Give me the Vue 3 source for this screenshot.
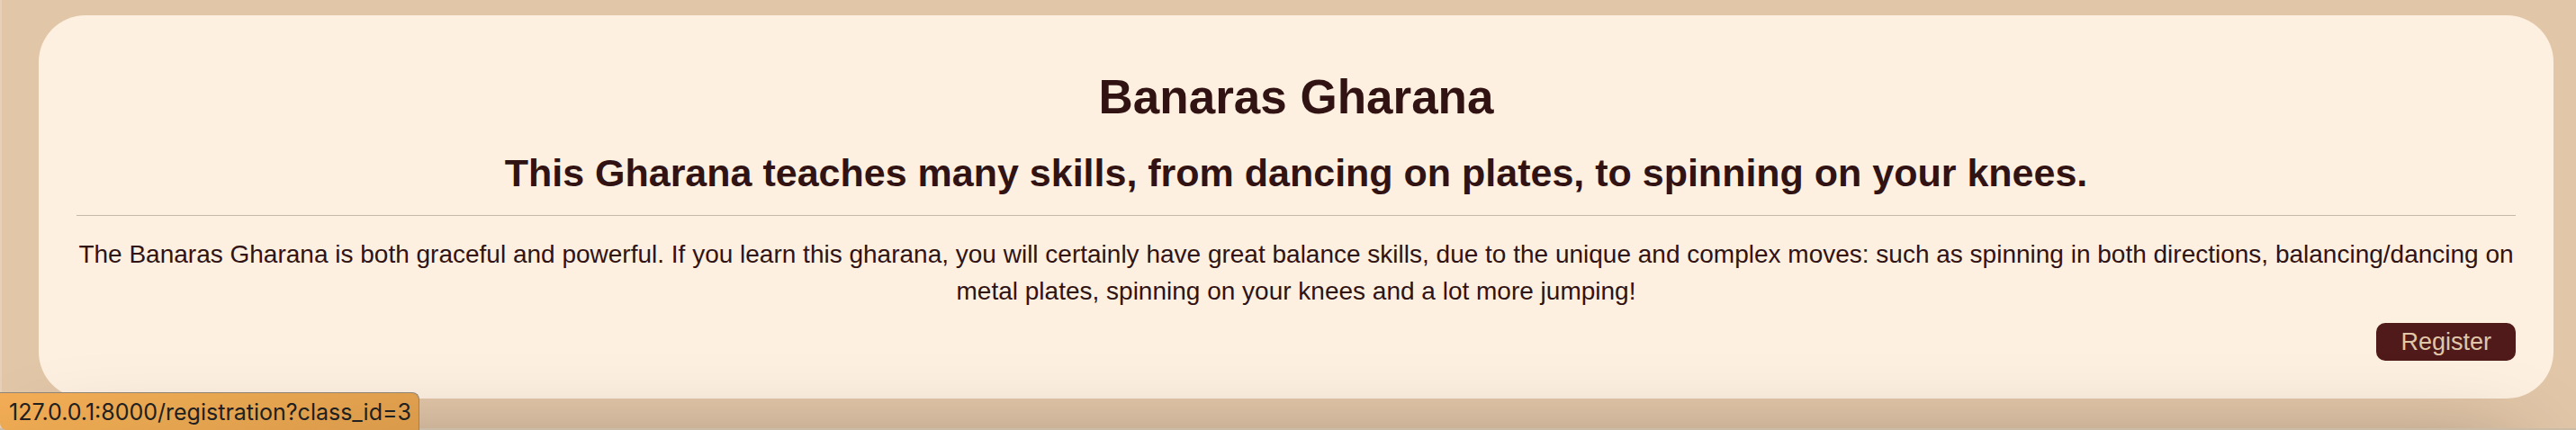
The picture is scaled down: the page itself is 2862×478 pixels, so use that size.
<script setup>
const gharana = {
  id: 3,
  name: 'Banaras Gharana',
  tagline: 'This Gharana teaches many skills, from dancing on plates, to spinning on your knees.',
  description:
    'The Banaras Gharana is both graceful and powerful. If you learn this gharana, you will certainly have great balance skills, due to the unique and complex moves: such as spinning in both directions, balancing/dancing on metal plates, spinning on your knees and a lot more jumping!'
}
const host = '127.0.0.1:8000'
const path = `/registration?class_id=${gharana.id}`
</script>

<template>
  <main class="page">
    <article class="card">
      <h1 class="title">{{ gharana.name }}</h1>
      <h2 class="tagline">{{ gharana.tagline }}</h2>
      <hr class="rule" />
      <p class="description">{{ gharana.description }}</p>
      <div class="actions">
        <a class="register" :href="path">Register</a>
      </div>
    </article>
    <div class="shade"></div>
    <div class="status">{{ host }}{{ path }}</div>
  </main>
</template>

<style>
body {
  margin: 0;
  background: #e2c6a8;
}
</style>

<style scoped>
.page {
  position: relative;
  box-sizing: border-box;
  min-height: 100vh;
  padding: 17px 25px 35px 43px;
  overflow: hidden;
  background: #e2c6a8;
  box-shadow: inset 2px 0 #e6d0b8;
  color: #301312;
  font-family: "Liberation Sans", Arial, sans-serif;
}

.page::after {
  content: "";
  position: absolute;
  right: 0;
  bottom: 0;
  left: 0;
  height: 2px;
  background: #cbbca8;
}

.card {
  padding: 59px 42px 42px;
  border-radius: 52px;
  background: #fdf0e1;
  text-align: center;
}

.title {
  margin: 0;
  font-size: 53px;
  line-height: 64px;
}

.tagline {
  margin: 24px 0 19px;
  font-size: 43px;
  line-height: 56px;
}

.rule {
  height: 1px;
  margin: 0;
  border: 0;
  background: #c4baac;
}

.description {
  margin: 0 -8px;
  padding: 22px 0 15px;
  font-size: 28px;
  line-height: 41px;
}

.actions {
  display: flex;
  justify-content: flex-end;
}

.register {
  padding: 0 27px;
  border-radius: 10px;
  background: #4f1a19;
  color: #e2c6a8;
  font-size: 27px;
  line-height: 42px;
  text-decoration: none;
}

.shade {
  position: absolute;
  top: calc(100% + 26px);
  right: 70px;
  left: 50px;
  height: 200px;
  box-shadow: 0 0 100px rgba(0, 0, 0, 0.35);
}

.status {
  position: absolute;
  z-index: 1;
  bottom: 0;
  left: 0;
  box-sizing: border-box;
  padding: 1px 8px 0 10px;
  border: 1px solid #8d8377;
  border-width: 1px 1px 0 0;
  border-radius: 0 8px 0 8px;
  background: linear-gradient(165deg, #f3ac55, #e7a650 40%, #d99a4b);
  color: #202020;
  font-family: Inter, sans-serif;
  font-size: 25px;
  line-height: 40px;
}
</style>
